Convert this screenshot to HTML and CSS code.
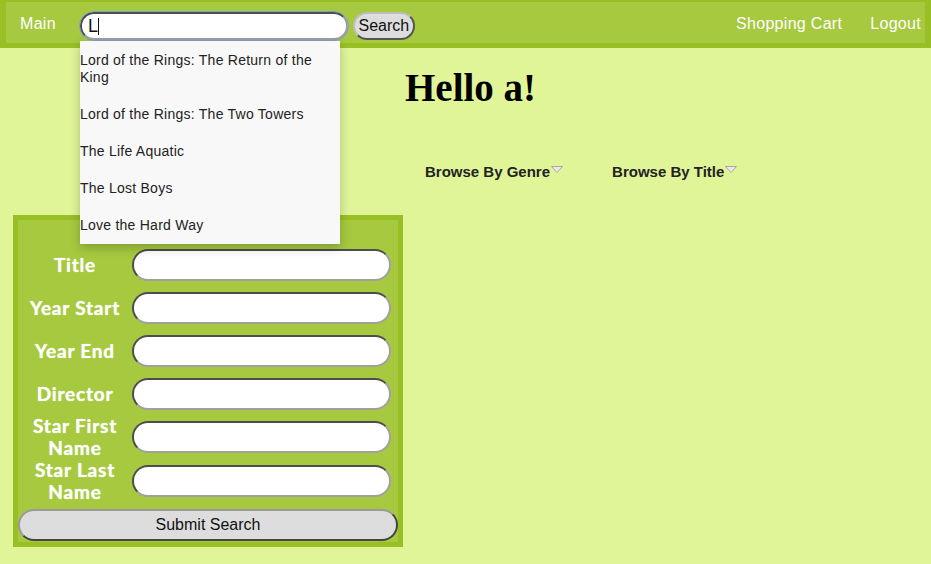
FILE: index.html
```html
<!DOCTYPE html>
<html>
<head>
<meta charset="utf-8">
<title>Movies</title>
<link rel="stylesheet" href="styles.css">
</head>
<body>
<header class="topbar">
  <a class="navlink nav-main" href="#">Main</a>
  <form class="searchform">
    <div class="searchwrap">
      <input class="searchbox" type="text" value="L">
      <span class="caret"></span>
      <ul class="suggest">
        <li>Lord of the Rings: The Return of the King</li>
        <li>Lord of the Rings: The Two Towers</li>
        <li>The Life Aquatic</li>
        <li>The Lost Boys</li>
        <li>Love the Hard Way</li>
      </ul>
    </div>
    <button class="searchbtn" type="button">Search</button>
  </form>
  <nav class="rightnav">
    <a class="navlink" href="#">Shopping Cart</a>
    <a class="navlink" href="#">Logout</a>
  </nav>
</header>
<main class="page">
  <aside class="sidebar">
    <form class="advsearch">
      <div class="row"><label class="lbl">Title</label><input class="field" type="text"></div>
      <div class="row"><label class="lbl">Year Start</label><input class="field" type="text"></div>
      <div class="row"><label class="lbl">Year End</label><input class="field" type="text"></div>
      <div class="row"><label class="lbl">Director</label><input class="field" type="text"></div>
      <div class="row"><label class="lbl">Star First Name</label><input class="field" type="text"></div>
      <div class="row"><label class="lbl">Star Last Name</label><input class="field" type="text"></div>
      <button class="submitbtn" type="button">Submit Search</button>
    </form>
  </aside>
  <section class="content">
    <h1 class="hello">Hello a!</h1>
    <nav class="browse">
      <a class="browse-item" href="#">Browse By Genre<svg class="tri" width="12" height="7" viewBox="0 0 12 7"><path d="M0.5 0.5 L11.5 0.5 L6 6.5 Z" fill="#e8e8e8" stroke="#a8a8a8" stroke-width="1"/></svg></a>
      <a class="browse-item" href="#">Browse By Title<svg class="tri" width="12" height="7" viewBox="0 0 12 7"><path d="M0.5 0.5 L11.5 0.5 L6 6.5 Z" fill="#e8e8e8" stroke="#a8a8a8" stroke-width="1"/></svg></a>
    </nav>
  </section>
</main>
</body>
</html>
```

FILE: styles.css
```css
html, body {
  margin: 0;
  padding: 0;
}
body {
  background: #dff598;
  font-family: "Liberation Sans", Arial, sans-serif;
  width: 931px;
  height: 564px;
  overflow: hidden;
}
.topbar {
  position: relative;
  display: flex;
  align-items: flex-start;
  height: 41px;
  background: #a6c93f;
  border-style: solid;
  border-color: #98bf24;
  border-width: 2px 6px 5px 6px;
  z-index: 5;
}
.navlink {
  color: #ffffff;
  text-decoration: none;
  font-size: 16px;
  line-height: 18px;
  letter-spacing: 0.3px;
  margin-top: 13px;
}
.nav-main {
  margin-left: 14px;
  margin-right: 24px;
}
.searchform {
  display: flex;
  align-items: flex-start;
  margin-top: 10px;
}
.searchwrap {
  position: relative;
}
.searchbox {
  display: block;
  box-sizing: border-box;
  width: 268px;
  height: 28px;
  margin: 0;
  padding: 0 6px;
  font-family: "Liberation Sans", Arial, sans-serif;
  font-size: 18px;
  color: #111;
  background: #fff;
  border: 2px solid;
  border-color: #4d4d4d #a0a0a0 #a0a0a0 #4d4d4d;
  border-radius: 14px;
  outline: 1px solid #7d9fcf;
  outline-offset: 0;
}
.caret {
  position: absolute;
  left: 18px;
  top: 6px;
  width: 1px;
  height: 17px;
  background: #111;
}
.suggest {
  position: absolute;
  left: 0;
  top: 29px;
  width: 260px;
  margin: 0;
  padding: 1px 0 0 0;
  list-style: none;
  background: #f8f8f8;
  box-shadow: 0 4px 10px rgba(0, 0, 0, 0.22);
}
.suggest li {
  font-size: 14px;
  line-height: 17px;
  letter-spacing: 0.25px;
  color: #222;
  padding: 10px 16px 10px 0;
}
.searchbtn {
  box-sizing: border-box;
  margin: 0 0 0 5px;
  height: 28px;
  width: 62px;
  padding: 0;
  font-family: "Liberation Sans", Arial, sans-serif;
  font-size: 16px;
  color: #111;
  background: #dddddd;
  border: 2px solid;
  border-color: #bdbdbd #555 #555 #bdbdbd;
  border-radius: 14px;
}
.rightnav {
  margin-left: auto;
  display: flex;
  gap: 28px;
  padding-right: 4px;
}
.page {
  display: flex;
  align-items: flex-start;
}
.sidebar {
  width: 390px;
  margin: 167px 2px 0 13px;
  flex: none;
}
.advsearch {
  background: #a6c93f;
  border: 5px solid #98bf24;
  padding: 23px 0 1px 0;
}
.row {
  display: flex;
  align-items: center;
  min-height: 43px;
}
.lbl {
  width: 114px;
  text-align: center;
  font-family: Lato, "Open Sans", sans-serif;
  font-weight: bold;
  font-size: 19px;
  line-height: 22px;
  letter-spacing: 0.8px;
  color: #ffffff;
  text-shadow: 0 0 1px #f0ffe0;
}
.field {
  box-sizing: border-box;
  width: 259px;
  height: 32px;
  margin: 0;
  background: #fff;
  border: 2px solid;
  border-color: #4d4d4d #a0a0a0 #a0a0a0 #4d4d4d;
  border-radius: 16px;
  padding: 0 10px;
}
.submitbtn {
  display: block;
  box-sizing: border-box;
  width: 380px;
  height: 32px;
  margin: 6px 0 0 0;
  font-family: "Liberation Sans", Arial, sans-serif;
  font-size: 16px;
  color: #111;
  background: #dddddd;
  border: 2px solid;
  border-color: #9a9a9a #444 #444 #9a9a9a;
  border-radius: 16px;
}
.content {
  flex: 1;
}
.hello {
  margin: 17px 0 0 0;
  font-family: "Liberation Serif", "Times New Roman", serif;
  font-weight: bold;
  font-size: 39px;
  line-height: 45px;
  color: #000;
}
.browse {
  display: flex;
  gap: 49px;
  margin-top: 53px;
  padding-left: 20px;
}
.browse-item {
  display: flex;
  align-items: flex-start;
  color: #222;
  text-decoration: none;
  font-weight: bold;
  font-size: 15px;
  line-height: 18px;
}
.tri {
  margin-left: 1px;
  margin-top: 3px;
}
```
